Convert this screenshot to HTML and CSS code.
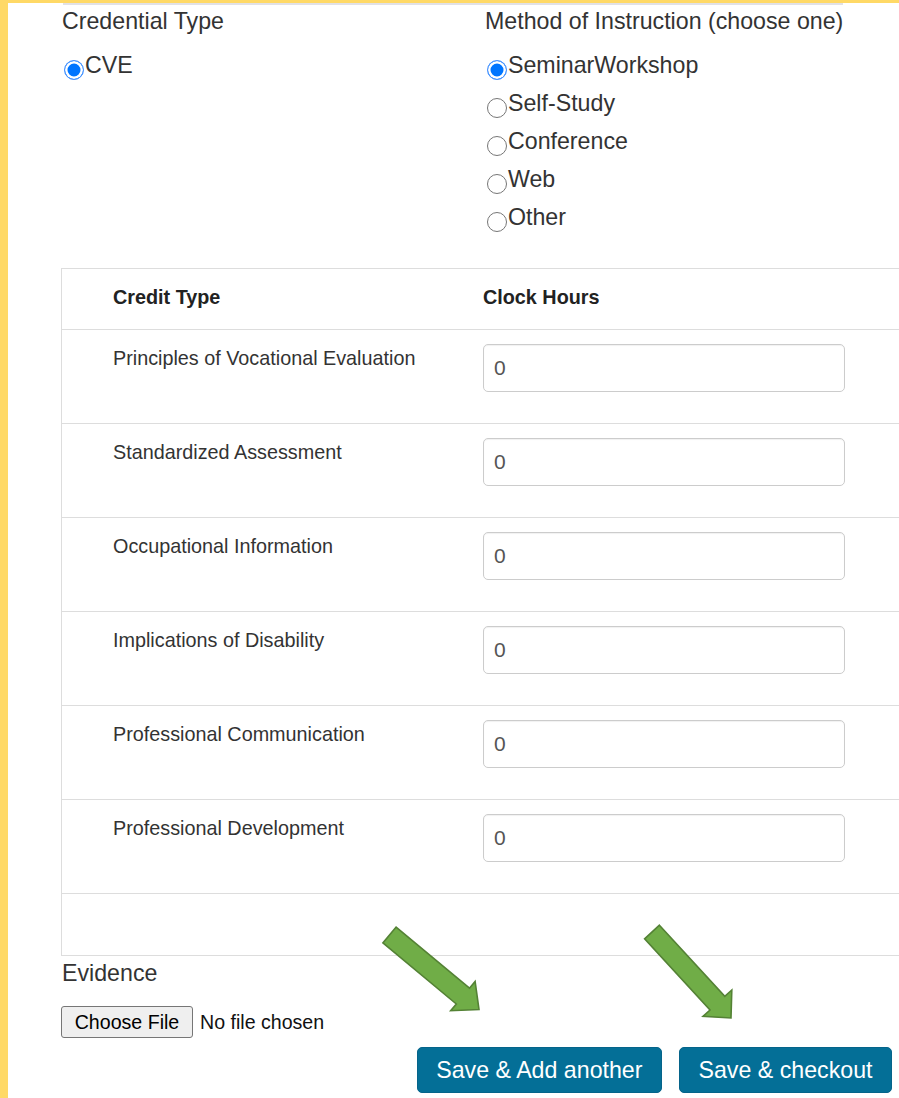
FILE: index.html
```html
<!DOCTYPE html>
<html lang="en">
<head>
<meta charset="utf-8">
<title>Add Credits</title>
<link rel="stylesheet" href="styles.css">
</head>
<body>
<div class="page">
  <div class="top-rule"></div>
  <form class="content">
    <div class="choices">
      <div class="group group-credential">
        <div class="group-title">Credential Type</div>
        <label class="opt"><input type="radio" name="credential" checked>CVE</label>
      </div>
      <div class="group group-method">
        <div class="group-title">Method of Instruction (choose one)</div>
        <label class="opt"><input type="radio" name="method" checked>SeminarWorkshop</label>
        <label class="opt"><input type="radio" name="method">Self-Study</label>
        <label class="opt"><input type="radio" name="method">Conference</label>
        <label class="opt"><input type="radio" name="method">Web</label>
        <label class="opt"><input type="radio" name="method">Other</label>
      </div>
    </div>

    <table class="credits">
      <colgroup>
        <col class="col-type">
        <col class="col-hours">
      </colgroup>
      <thead>
        <tr>
          <th>Credit Type</th>
          <th>Clock Hours</th>
        </tr>
      </thead>
      <tbody>
        <tr>
          <td>Principles of Vocational Evaluation</td>
          <td><input class="hours" type="text" value="0"></td>
        </tr>
        <tr>
          <td>Standardized Assessment</td>
          <td><input class="hours" type="text" value="0"></td>
        </tr>
        <tr>
          <td>Occupational Information</td>
          <td><input class="hours" type="text" value="0"></td>
        </tr>
        <tr>
          <td>Implications of Disability</td>
          <td><input class="hours" type="text" value="0"></td>
        </tr>
        <tr>
          <td>Professional Communication</td>
          <td><input class="hours" type="text" value="0"></td>
        </tr>
        <tr>
          <td>Professional Development</td>
          <td><input class="hours" type="text" value="0"></td>
        </tr>
        <tr class="spacer-row">
          <td><div class="spacer"></div></td>
          <td></td>
        </tr>
      </tbody>
    </table>

    <div class="evidence-label">Evidence</div>
    <div class="file-row">
      <span class="file-btn">Choose File</span>
      <span class="file-name">No file chosen</span>
    </div>

    <div class="actions">
      <button type="button" class="btn">Save &amp; Add another</button>
      <button type="button" class="btn">Save &amp; checkout</button>
    </div>
  </form>

  <svg class="arrows" viewBox="8 3 891 1095" width="891" height="1095" aria-hidden="true">
    <polygon points="396.1,927.1 469.5,988.2 475.1,981.5 479,1009.5 450.7,1010.7 456.3,1004 382.9,942.9"/>
    <polygon points="659.4,925.2 724.8,996.4 731.8,990 731,1018 703,1016.4 710,1010 644.6,938.8"/>
  </svg>
</div>
</body>
</html>
```

FILE: styles.css
```css
html, body {
  margin: 0;
  padding: 0;
}

body {
  background: #ffd966;
  overflow: hidden;
  font-family: "Liberation Sans", Arial, sans-serif;
  color: #333;
}

.page {
  position: relative;
  margin: 3px 0 0 8px;
  min-height: 1095px;
  background: #fff;
}

.top-rule {
  height: 2px;
  margin-left: 55px;
  width: 780px;
  background: #e1e1e6;
}

.content {
  margin: 0;
  padding-left: 53px;
}

/* radio groups */
.choices {
  display: flex;
  align-items: flex-start;
}

.group-credential {
  width: 423px;
  margin-left: 1px;
}

.group-title {
  font-size: 23.2px;
  line-height: 32px;
  margin-bottom: 9px;
}

.opt {
  display: block;
  font-size: 23.2px;
  line-height: 38px;
  white-space: nowrap;
}

.opt input {
  -webkit-appearance: none;
  appearance: none;
  display: inline-block;
  box-sizing: border-box;
  width: 20px;
  height: 20px;
  margin: 0 1px 0 2px;
  border: 1.5px solid #767676;
  border-radius: 50%;
  background: #fff;
  vertical-align: -7px;
}

.opt input:checked {
  border-color: #4a94ff;
  background: #0075ff;
  box-shadow: inset 0 0 0 2.5px #fff;
}

/* credits table */
.credits {
  width: 860px;
  margin-top: 32px;
  table-layout: fixed;
  border-collapse: separate;
  border-spacing: 0;
  border-top: 1px solid #ddd;
  border-left: 1px solid #ddd;
  border-bottom: 1px solid #ddd;
  font-size: 19.8px;
  line-height: 28px;
}

.col-type {
  width: 409px;
}

.credits th,
.credits td {
  text-align: left;
  vertical-align: top;
  padding: 14px 12px 14px 12px;
}

.credits th {
  font-weight: bold;
  color: #222;
  padding-bottom: 18px;
  border-bottom: 1px solid #ddd;
}

.credits th:first-child,
.credits td:first-child {
  padding-left: 51px;
}

.credits tbody tr:not(:last-child) td {
  border-bottom: 1px solid #ddd;
}

.hours {
  display: block;
  box-sizing: border-box;
  width: 362px;
  height: 48px;
  margin: 0 0 17px 0;
  padding: 0 10px;
  border: 1px solid #ccc;
  border-radius: 5px;
  font-family: "Liberation Sans", Arial, sans-serif;
  font-size: 21px;
  color: #555;
  background: #fff;
  box-shadow: inset 0 1px 1px rgba(0, 0, 0, 0.06);
}

.spacer {
  height: 33px;
}

/* evidence upload */
.evidence-label {
  margin: 1px 0 0 1px;
  font-size: 23.2px;
  line-height: 32px;
}

.file-row {
  display: flex;
  align-items: center;
  margin-top: 17px;
  font-size: 19.6px;
  color: #111;
}

.file-btn {
  box-sizing: border-box;
  width: 132px;
  height: 32px;
  line-height: 30px;
  text-align: center;
  background: #efefef;
  border: 1px solid #767676;
  border-radius: 3px;
  color: #000;
}

.file-name {
  margin-left: 7px;
}

/* action buttons */
.actions {
  display: flex;
  justify-content: flex-end;
  gap: 17px;
  margin-top: 9px;
  padding-right: 7px;
}

.btn {
  height: 46px;
  padding: 0 18.5px;
  border: 1px solid #05648a;
  border-radius: 5px;
  background: #046f97;
  color: #fff;
  font-family: "Liberation Sans", Arial, sans-serif;
  font-size: 23.2px;
  line-height: 44px;
}

/* callout arrows */
.arrows {
  position: absolute;
  left: 0;
  top: 0;
  pointer-events: none;
}

.arrows polygon {
  fill: #70ad47;
  stroke: #548235;
  stroke-width: 1.6;
  stroke-linejoin: miter;
}
```
